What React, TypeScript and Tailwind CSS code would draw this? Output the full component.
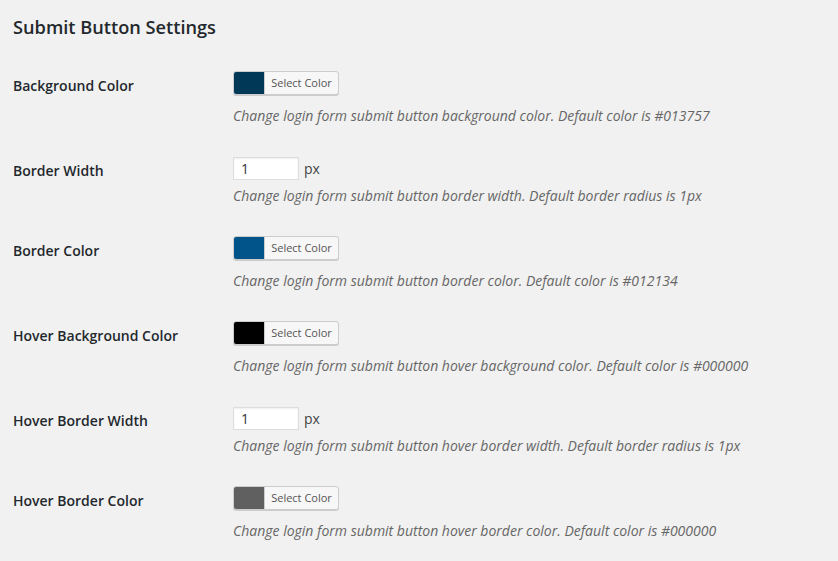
const font = { fontFamily: '"Open Sans", "Liberation Sans", sans-serif' };

type Row =
    | { label: string; kind: "color"; swatch: string; desc: string }
    | { label: string; kind: "number"; value: string; desc: string };

const rows: Row[] = [
    { label: "Background Color", kind: "color", swatch: "bg-[#013757]", desc: "Change login form submit button background color. Default color is #013757" },
    { label: "Border Width", kind: "number", value: "1", desc: "Change login form submit button border width. Default border radius is 1px" },
    { label: "Border Color", kind: "color", swatch: "bg-[#00548a]", desc: "Change login form submit button border color. Default color is #012134" },
    { label: "Hover Background Color", kind: "color", swatch: "bg-[#000000]", desc: "Change login form submit button hover background color. Default color is #000000" },
    { label: "Hover Border Width", kind: "number", value: "1", desc: "Change login form submit button hover border width. Default border radius is 1px" },
    { label: "Hover Border Color", kind: "color", swatch: "bg-[#606060]", desc: "Change login form submit button hover border color. Default color is #000000" },
];

const ColorButton = ({ swatch }: { swatch: string }) => (
    <button
        type="button"
        className="flex h-6 w-[106px] overflow-hidden rounded-[3px] border border-[#cccccc] bg-[#f7f7f7] shadow-[0_1px_0_#cccccc] cursor-pointer"
    >
        <span className={`h-full w-[30px] ${swatch}`} />
        <span className="flex-1 border-l border-[#cccccc] text-[11px] leading-[22px] text-[#555555] text-center">
            Select Color
        </span>
    </button>
);

export default function App() {
    return (
        <div className="min-h-[561px] w-full bg-[#f1f1f1] px-[13px] text-[#23282d]" style={font}>
            <h2 className="pt-[15px] text-[18.2px] font-semibold leading-6 mb-[17px]">Submit Button Settings</h2>

            {rows.map(row => (
                <div key={row.label} className="flex">
                    <div className="w-[220px] shrink-0 pt-[21px] text-[14px] font-semibold leading-[18px]">
                        {row.label}
                    </div>
                    <div className="pt-[15px] pb-[15px]">
                        {row.kind === "color" ? (
                            <ColorButton swatch={row.swatch} />
                        ) : (
                            <div className="flex h-[25px] items-center">
                                <input
                                    className="h-[23px] w-[66px] border border-[#dddddd] bg-white px-[7px] text-[14px] text-[#32373c] shadow-[inset_0_1px_2px_rgba(0,0,0,0.07)] outline-none"
                                    defaultValue={row.value}
                                    style={font}
                                />
                                <span className="ml-[5px] text-[14px] text-[#444444]">px</span>
                            </div>
                        )}
                        <p
                            className={`${row.kind === "color" ? "mt-[11px]" : "mt-[5px]"} text-[14px] italic leading-5 text-[#666666]`}
                        >
                            {row.desc}
                        </p>
                    </div>
                </div>
            ))}
        </div>
    );
}
